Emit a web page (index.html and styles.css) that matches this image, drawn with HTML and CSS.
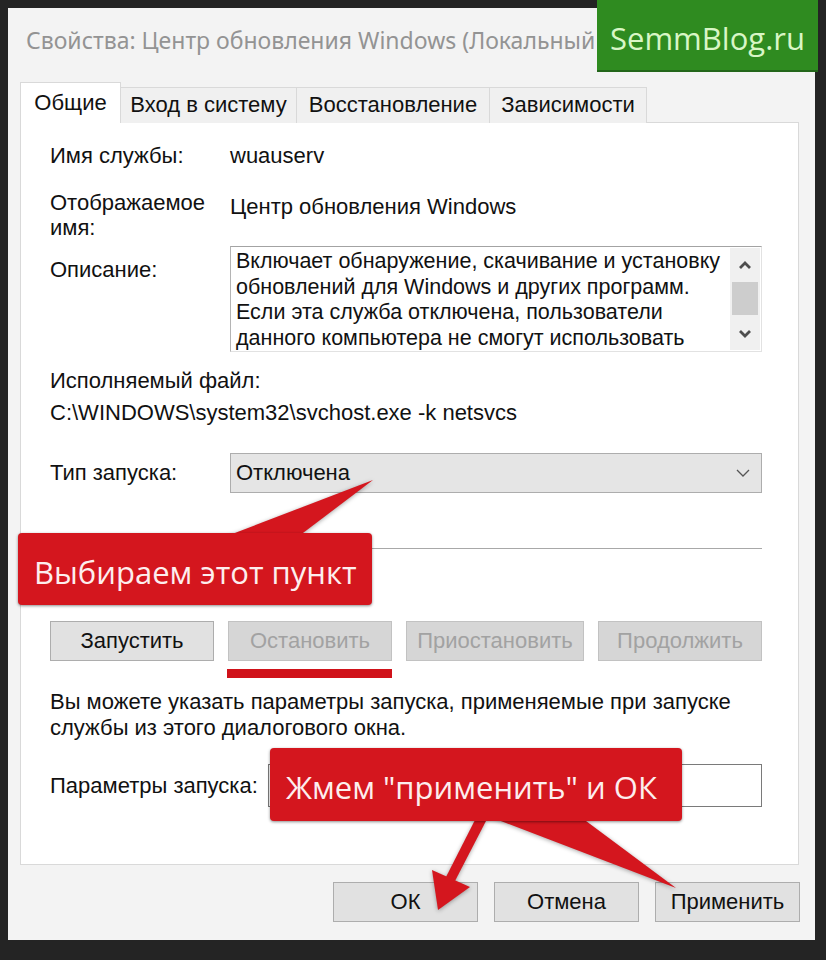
FILE: index.html
```html
<!DOCTYPE html>
<html lang="ru">
<head>
	<meta charset="UTF-8">
	<title>Свойства: Центр обновления Windows</title>
	<link rel="stylesheet" href="styles.css">
</head>
<body>
	<div class="window">
		<div class="title">Свойства: Центр обновления Windows (Локальный</div>
		<ul class="tabs">
			<li class="current tab1">Общие</li>
			<li class="tab2">Вход в систему</li>
			<li class="tab3">Восстановление</li>
			<li class="tab4">Зависимости</li>
		</ul>
		<div class="panel">
			<div class="row name-row">
				<span class="label">Имя службы:</span>
				<span class="value">wuauserv</span>
			</div>
			<div class="row display-row">
				<span class="label">Отображаемое<br>имя:</span>
				<span class="value">Центр обновления Windows</span>
			</div>
			<div class="row desc-row">
				<span class="label">Описание:</span>
				<div class="desc">
					<div class="desc-text">Включает обнаружение, скачивание и установку<br>обновлений для Windows и других программ.<br>Если эта служба отключена, пользователи<br>данного компьютера не смогут использовать</div>
					<div class="scrollbar">
						<div class="sb-btn sb-up">
							<svg width="14" height="10" viewBox="0 0 14 10"><polyline points="2,8 7,3 12,8" fill="none" stroke="#4e4e4e" stroke-width="2.8"/></svg>
						</div>
						<div class="sb-thumb"></div>
						<div class="sb-space"></div>
						<div class="sb-btn sb-down">
							<svg width="14" height="10" viewBox="0 0 14 10"><polyline points="2,2 7,7 12,2" fill="none" stroke="#4e4e4e" stroke-width="2.8"/></svg>
						</div>
					</div>
				</div>
			</div>
			<div class="exe-label">Исполняемый файл:</div>
			<div class="exe-path">C:\WINDOWS\system32\svchost.exe -k netsvcs</div>
			<div class="row start-row">
				<span class="label">Тип запуска:</span>
				<div class="select">
					<span>Отключена</span>
					<svg width="16" height="10" viewBox="0 0 16 10"><polyline points="2,2 8,8 14,2" fill="none" stroke="#555" stroke-width="1.3"/></svg>
				</div>
			</div>
			<div class="separator"></div>
			<div class="buttons">
				<button class="btn w164">Запустить</button>
				<button class="btn w164 disabled marked">Остановить</button>
				<button class="btn w178 disabled">Приостановить</button>
				<button class="btn w164 disabled">Продолжить</button>
			</div>
			<div class="info">Вы можете указать параметры запуска, применяемые при запуске<br>службы из этого диалогового окна.</div>
			<div class="params-row">
				<span class="label">Параметры запуска:</span>
				<div class="input"></div>
			</div>
		</div>
		<div class="footer">
			<button class="btn dlg">ОК</button>
			<button class="btn dlg">Отмена</button>
			<button class="btn dlg">Применить</button>
		</div>
	</div>

	<div class="badge">SemmBlog.ru</div>

	<!-- стрелки от выносок -->
	<svg class="pointers" width="826" height="960" viewBox="0 0 826 960">
		<polygon points="227,536 373,480 299,536"/>
		<polygon points="476,818 486,821 455,881 446,877"/>
		<polygon points="432,870 470,887 438,910"/>
		<polygon points="493,818 582,818 676,888"/>
	</svg>
	<div class="callout callout1">Выбираем этот пункт</div>
	<div class="callout callout2">Жмем "применить" и ОК</div>
</body>
</html>
```

FILE: styles.css
```css
*{
	margin: 0;
	padding: 0;
	box-sizing: border-box;
}
body{
	width: 826px;
	height: 960px;
	overflow: hidden;
	position: relative;
	background: #242424;
	font-family: "Liberation Sans", Arial, sans-serif;
	color: #111;
}
.window{
	margin: 8px 0 0 8px;
	width: 807px;
	height: 932px;
	background: #f3f3f3;
	padding: 0 16px 0 12px;
	display: flex;
	flex-direction: column;
}
.title{
	height: 74px;
	padding-left: 6px;
	line-height: 64px;
	font-family: "Noto Sans", "Liberation Sans", sans-serif;
	font-size: 23px;
	color: #939393;
	white-space: nowrap;
}

/* вкладки */
.tabs{
	display: flex;
	align-items: flex-end;
	list-style: none;
	height: 41px;
	margin-bottom: -1px;
	position: relative;
	z-index: 1;
}
.tabs li{
	height: 36px;
	border: 1px solid #d9d9d9;
	border-bottom: none;
	margin-left: -1px;
	background: #f0f0f0;
	font-size: 22px;
	line-height: 34px;
	text-align: center;
}
.tabs li.current{
	height: 41px;
	margin-left: 0;
	background: #fff;
	line-height: 40px;
}
.tab1{ width: 101px; }
.tab2{ width: 177px; }
.tab3{ width: 194px; }
.tab4{ width: 158px; }

.panel{
	height: 743px;
	flex: none;
	border: 1px solid #d9d9d9;
	background: #fff;
	padding: 20px 36px 0 29px;
	font-size: 22px;
}
.row{
	display: grid;
	grid-template-columns: 180px 1fr;
	line-height: 26px;
}
.display-row{
	margin-top: 21px;
}
.display-row .label{
	line-height: 25px;
}
.display-row .value{
	padding-top: 4px;
}
.desc-row{
	margin-top: 6px;
}
.desc-row .label{
	padding-top: 11px;
}
.desc{
	height: 106px;
	display: flex;
	border: 1px solid #e2e2e2;
	border-top-color: #a3a3a3;
	border-left-color: #b4b4b4;
	overflow: hidden;
}
.desc-text{
	flex: 1;
	padding: 2px 0 0 5px;
	font-size: 21.5px;
	line-height: 25.5px;
	white-space: nowrap;
	overflow: hidden;
}
.scrollbar{
	width: 30px;
	margin: 1px 1px 1px 0;
	background: #f0f0f0;
	display: flex;
	flex-direction: column;
}
.sb-btn{
	height: 34px;
	display: flex;
	align-items: center;
	justify-content: center;
}
.sb-down{
	height: 32px;
}
.sb-thumb{
	height: 33px;
	margin: 0 2px;
	background: #cdcdcd;
}
.sb-space{
	flex: 1;
}
.exe-label{
	margin-top: 16px;
	line-height: 26px;
}
.exe-path{
	margin-top: 6px;
	line-height: 26px;
}
.start-row{
	margin-top: 27px;
	line-height: 40px;
}
.select{
	height: 40px;
	border: 1px solid #adadad;
	background: #e5e5e5;
	padding: 0 10px 0 5px;
	display: flex;
	align-items: center;
	justify-content: space-between;
	line-height: 38px;
}
.separator{
	margin-top: 55px;
	height: 1px;
	background: #a8a8a8;
}
.buttons{
	margin-top: 72px;
	display: flex;
	gap: 14px;
}
.btn{
	height: 40px;
	border: 1px solid #adadad;
	background: #e1e1e1;
	font-family: "Liberation Sans", Arial, sans-serif;
	font-size: 22px;
	color: #111;
	position: relative;
}
.w164{ width: 164px; }
.w178{ width: 178px; }
.btn.disabled{
	background: #d6d6d6;
	border-color: #c2c2c2;
	color: #a2a2a2;
}
.btn.marked::after{
	content: "";
	position: absolute;
	left: -2px;
	right: -1px;
	top: 47px;
	height: 9px;
	background: #d0121a;
}
.info{
	margin-top: 28px;
	line-height: 26px;
}
.params-row{
	margin-top: 23px;
	display: flex;
	align-items: center;
	gap: 10px;
}
.input{
	flex: 1;
	height: 43px;
	border: 1px solid #7a7a7a;
	background: #fff;
}
.footer{
	margin-top: 17px;
	margin-right: -1px;
	display: flex;
	justify-content: flex-end;
	gap: 16px;
}
.btn.dlg{
	width: 145px;
	height: 40px;
}

/* логотип и выноски поверх окна */
.badge{
	position: absolute;
	left: 597px;
	top: 0;
	width: 221px;
	height: 72px;
	background: #2f8b20;
	border-bottom: 2px solid #23661a;
	color: #d9f6c6;
	font-family: "Open Sans", "Noto Sans", sans-serif;
	font-size: 31px;
	line-height: 76px;
	text-align: center;
}
.pointers{
	position: absolute;
	left: 0;
	top: 0;
	fill: #d4161e;
	filter: drop-shadow(0 1px 2px rgba(0,0,0,.35));
}
.callout{
	position: absolute;
	background: #d4161e;
	border-radius: 4px;
	box-shadow: 0 1px 3px rgba(0,0,0,.45);
	color: #fdeeee;
	font-family: "Open Sans", "Noto Sans", sans-serif;
	font-size: 31px;
	white-space: nowrap;
	padding-left: 16px;
}
.callout1{
	left: 18px;
	top: 533px;
	width: 354px;
	height: 72px;
	line-height: 78px;
}
.callout2{
	left: 270px;
	top: 748px;
	width: 412px;
	height: 73px;
	line-height: 78px;
}
```
